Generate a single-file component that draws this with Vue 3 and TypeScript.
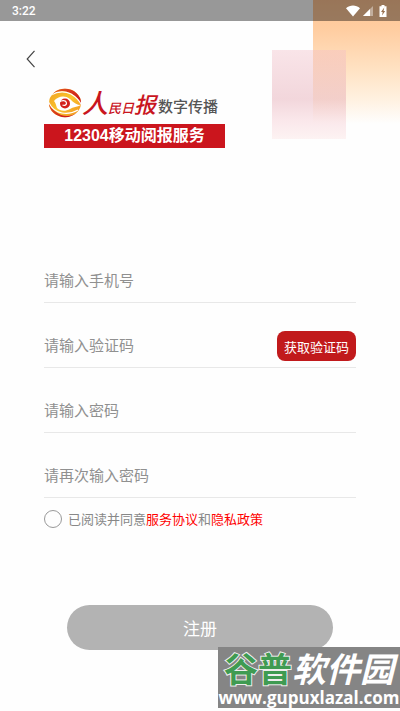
<script setup lang="ts">
import { ref } from 'vue'

interface Field {
  id: string
  type: string
  placeholder: string
  hasCode?: boolean
}

const fields: Field[] = [
  { id: 'phone', type: 'tel', placeholder: '请输入手机号' },
  { id: 'code', type: 'text', placeholder: '请输入验证码', hasCode: true },
  { id: 'password', type: 'password', placeholder: '请输入密码' },
  { id: 'confirm', type: 'password', placeholder: '请再次输入密码' },
]

const values = ref<Record<string, string>>({ phone: '', code: '', password: '', confirm: '' })
const agreed = ref(false)
</script>

<template>
  <div class="page">
    <div class="glow" aria-hidden="true"></div>
    <div class="blush" aria-hidden="true"></div>

    <header class="status">
      <span>3:22</span>
      <span class="status-icons">
        <svg width="14" height="12" viewBox="0 0 14 12"><path d="M0 3.2C4-.3 10-.3 14 3.2L7 11.5z" fill="#fff" /></svg>
        <svg width="10" height="12" viewBox="0 0 10 12">
          <path d="M10 1v10H0z" fill="#fff" opacity=".4" />
          <path d="M7 4v7H0z" fill="#fff" />
        </svg>
        <svg width="8" height="12" viewBox="0 0 8 12">
          <path d="M2.500 0h3v1.300H7.500V12H.5V1.300h2z" fill="#fff" />
          <path d="M5.300 2.500 2 7h1.700L3 10.500 6.200 6H4.500z" fill="#98714f" />
        </svg>
      </span>
    </header>

    <nav class="nav">
      <button class="back" type="button" aria-label="返回">
        <svg width="10" height="18" viewBox="0 0 10 18"><path d="M8.500.8 1.200 9l7.300 8.200" fill="none" stroke="#444" stroke-width="1.200" /></svg>
      </button>
    </nav>

    <main class="content">
      <div class="brand">
        <div class="brand-top">
          <svg class="emblem" width="34" height="30" viewBox="0 0 34 30">
            <defs>
              <linearGradient id="gold" x1="0" y1="0" x2="1" y2="1">
                <stop offset="0" stop-color="#ee9a20" />
                <stop offset=".5" stop-color="#fbc62e" />
                <stop offset="1" stop-color="#ee8a1e" />
              </linearGradient>
              <linearGradient id="crimson" x1="0" y1="0" x2="1" y2=".6">
                <stop offset="0" stop-color="#e8631f" />
                <stop offset="1" stop-color="#c8121b" />
              </linearGradient>
              <clipPath id="globe"><ellipse cx="17" cy="15" rx="16" ry="14.200" /></clipPath>
            </defs>
            <g clip-path="url(#globe)">
              <path d="M0 0h34v30H0z" fill="url(#gold)" />
              <path d="M5 6C11 1 19 3 24 6c5 3 8 8 10 13V0H5z" fill="url(#crimson)" />
              <path d="M0 12c2 6 6 12 13 15 6 2 11 1 16-2v5H0z" fill="url(#crimson)" />
              <path d="M3 7c7-4 14-4 20-1 5 3 9 7 11 12" fill="none" stroke="#fff" stroke-width="1.200" />
              <path d="M0 13c3 7 8 11 14 12 6 1 11 0 16-3" fill="none" stroke="#fff" stroke-width="1.200" />
              <path d="M6 13c4-5 11-6 16-2 4 4 7 6 11 6-4 2-8 2-11 4-5 3-10 2-13-1-1-2-1-5-3-7z" fill="#fff" />
            </g>
            <circle cx="17" cy="15.500" r="5" fill="#d3201c" />
            <path d="M11 14c3-2 7-2 7.500 1 0 2-2 3-4 2" fill="none" stroke="#fff" stroke-width="1.300" />
          </svg>
          <h1 class="masthead"><span class="stroke-big">人</span><span class="stroke-small">民日</span><span class="stroke-mid">报</span></h1>
          <span class="division">数字传播</span>
        </div>
        <div class="banner">12304移动阅报服务</div>
      </div>

      <form class="form" @submit.prevent>
        <div v-for="field in fields" :key="field.id" class="row">
          <input
            :id="field.id"
            v-model="values[field.id]"
            class="field"
            :type="field.type"
            :placeholder="field.placeholder"
            :aria-label="field.placeholder"
          />
          <button v-if="field.hasCode" class="code" type="button">获取验证码</button>
        </div>

        <div class="agree">
          <input id="agree" v-model="agreed" class="tick" type="checkbox" />
          <p class="terms"><label for="agree">已阅读并同意</label><a href="#terms">服务协议</a>和<a href="#privacy">隐私政策</a></p>
        </div>

        <button class="submit" type="submit">注册</button>
      </form>
    </main>

    <aside class="watermark">
      <div class="mark-name"><span class="mark-green">谷普</span>软件园</div>
      <div class="mark-url">www.gupuxlazal.com</div>
    </aside>
  </div>
</template>

<style>
body {
  background: #fefefe;
}
</style>

<style scoped>
.page {
  position: relative;
  min-height: 100vh;
  overflow: hidden;
  font-family: Roboto, "Noto Sans CJK SC", sans-serif;
  color: #888;
}

.glow {
  position: absolute;
  top: 0;
  right: 0;
  width: 87px;
  height: 124px;
  background: linear-gradient(#ffc493, #ffcea2 25%, #ffe3c5 58%, #fff1e0 80%, #fefefe);
}

.blush {
  position: absolute;
  top: 50px;
  right: 54px;
  width: 74px;
  height: 89px;
  background: linear-gradient(rgba(242, 190, 200, 0.4), rgba(226, 160, 172, 0.42) 55%, rgba(246, 205, 212, 0.45) 80%, rgba(252, 235, 235, 0.6));
}

.status {
  position: relative;
  display: flex;
  align-items: center;
  justify-content: space-between;
  height: 21px;
  padding: 0 13px 0 12px;
  background: rgba(0, 0, 0, 0.4);
  color: #fff;
  font-size: 12px;
  font-weight: 500;
}

.status-icons {
  display: flex;
  align-items: center;
  gap: 3px;
}

.status-icons svg:last-child {
  margin-left: 3px;
}

.nav {
  padding: 20px 17px 0;
}

.back {
  display: flex;
  align-items: center;
  justify-content: center;
  width: 28px;
  height: 36px;
  padding: 0;
  border: 0;
  background: none;
}

.content {
  position: relative;
  padding: 8px 44px 40px;
}

.brand {
  width: 181px;
}

.brand-top {
  display: flex;
  align-items: center;
  height: 39px;
  padding-left: 4px;
}

.emblem {
  flex: none;
  margin-bottom: 4px;
}

.masthead {
  display: flex;
  align-items: baseline;
  margin: 0 2px 0 0;
  padding-top: 3px;
  color: #c9151e;
  font-style: italic;
  font-weight: 500;
  line-height: 32px;
}

.stroke-big {
  font-size: 26px;
}

.stroke-small {
  font-size: 13px;
}

.stroke-mid {
  font-size: 22px;
}

.division {
  padding-top: 2px;
  color: #555;
  font-size: 15px;
  font-weight: 500;
  white-space: nowrap;
}

.banner {
  height: 24px;
  background: #cb151d;
  color: #fff;
  font-family: "Liberation Sans", "Noto Sans CJK SC", sans-serif;
  font-size: 16px;
  font-weight: 700;
  line-height: 24px;
  text-align: center;
}

.form {
  padding-top: 90px;
}

.row {
  display: flex;
  align-items: center;
  height: 42px;
  padding-top: 22px;
  border-bottom: 1px solid #e8e8e8;
}

.field {
  flex: 1;
  min-width: 0;
  height: 42px;
  padding: 0;
  border: 0;
  outline: 0;
  background: none;
  color: #444;
  font-family: inherit;
  font-size: 15px;
}

.field::placeholder {
  color: #909090;
}

.code {
  width: 79px;
  height: 30px;
  padding: 0;
  border: 0;
  border-radius: 8px;
  background: #c11a1c;
  color: #fff;
  font-family: inherit;
  font-size: 13px;
}

.agree {
  display: flex;
  align-items: center;
  gap: 6px;
  height: 41px;
}

.tick {
  width: 18px;
  height: 18px;
  margin: 0;
  border: 1px solid #999;
  border-radius: 50%;
  appearance: none;
}

.tick:checked {
  background: #c11a1c;
}

.terms {
  margin: 0;
  font-size: 13px;
}

.terms a {
  color: #f00;
  text-decoration: none;
}

.submit {
  display: block;
  width: calc(100% - 46px);
  height: 45px;
  margin: 66px auto 0;
  border: 0;
  border-radius: 23px;
  background: #b3b3b3;
  color: #fff;
  font-family: inherit;
  font-size: 17px;
}

.watermark {
  position: absolute;
  right: 0;
  bottom: 3px;
  width: 182px;
  height: 61px;
  background: #858585;
  color: #fff;
  text-align: center;
  white-space: nowrap;
}

.mark-name {
  font-family: "Noto Sans CJK SC", sans-serif;
  font-size: 34px;
  font-style: italic;
  font-weight: 700;
  line-height: 42px;
}

.mark-green {
  color: #3f9b52;
  font-style: normal;
  paint-order: stroke fill;
  -webkit-text-stroke: 2px #eee;
}

.mark-url {
  font-family: "Open Sans", sans-serif;
  font-size: 17px;
  font-weight: 700;
  line-height: 18px;
}
</style>
